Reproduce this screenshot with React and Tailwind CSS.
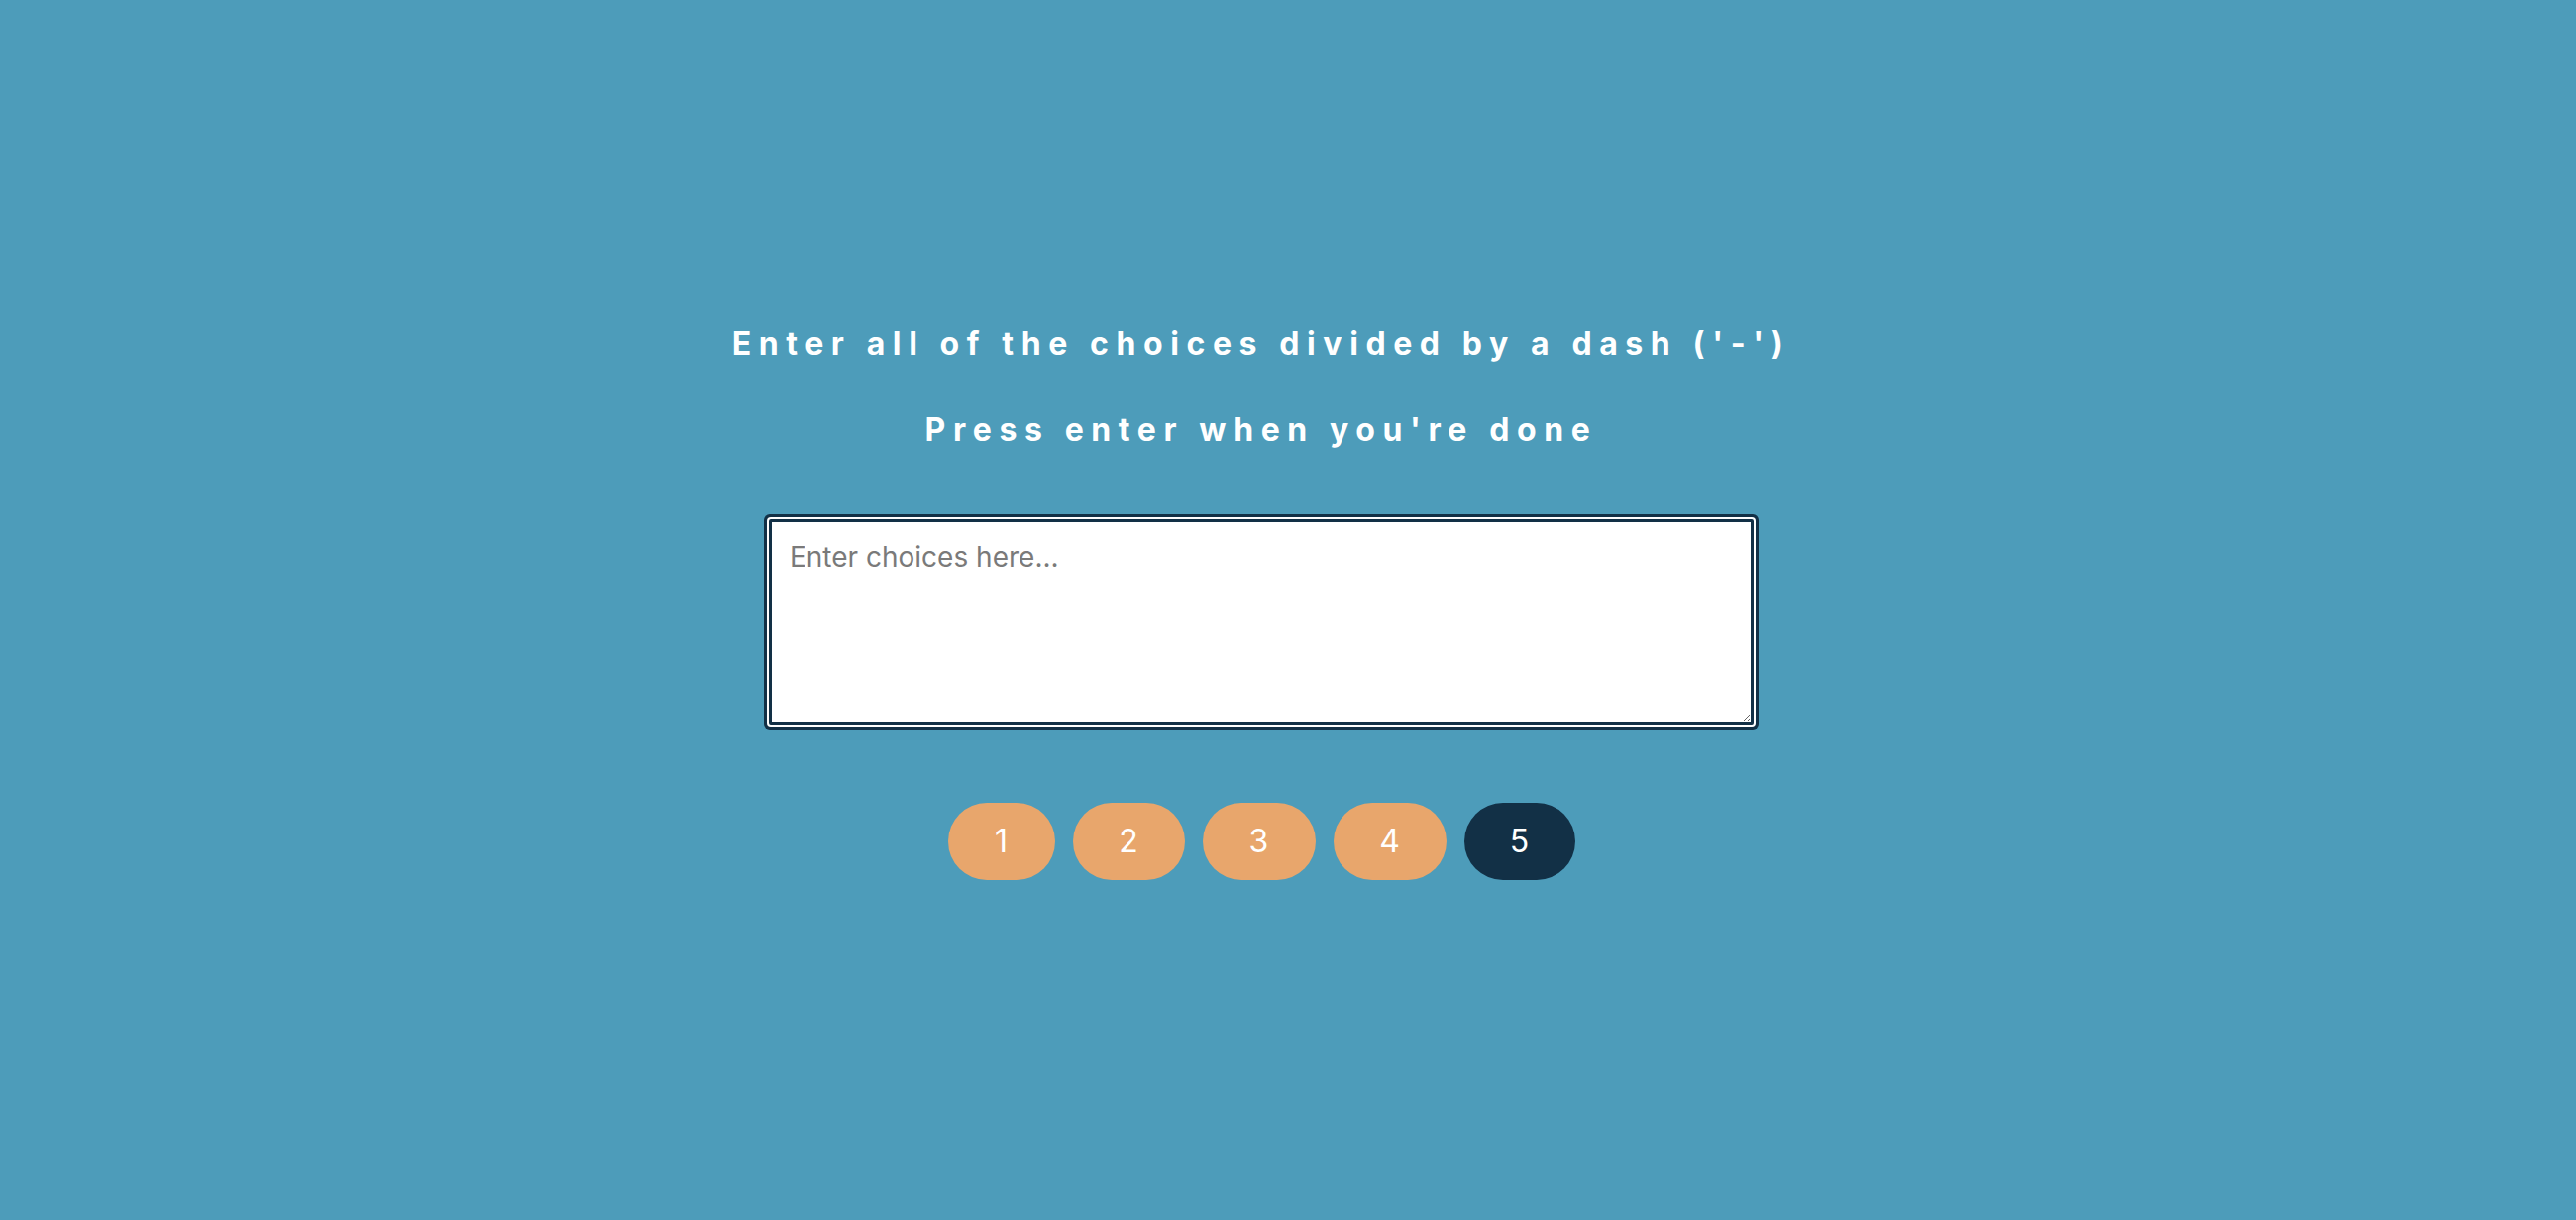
import React from "react";

const buttons = [
  { label: "1", cls: "w-[108px] bg-[#e8a66c]" },
  { label: "2", cls: "w-[113px] bg-[#e8a66c]" },
  { label: "3", cls: "w-[114px] bg-[#e8a66c]" },
  { label: "4", cls: "w-[114px] bg-[#e8a66c]" },
  { label: "5", cls: "w-[112px] bg-[#123046]" },
];

export default function App() {
  return (
    <div className="min-h-screen w-full bg-[#4d9cba] overflow-hidden">
      <div className="flex flex-col items-center pt-[328px] pr-[54px]">
        <h1 className="font-['Inter',sans-serif] font-bold text-[32px] leading-[37px] tracking-[7.6px] text-white">
          Enter all of the choices divided by a dash ('-')
        </h1>
        <h2 className="mt-[50px] font-['Inter',sans-serif] font-bold text-[32px] leading-[37px] tracking-[7.6px] text-white">
          Press enter when you're done
        </h2>
        <textarea
          placeholder="Enter choices here..."
          className="mt-[72px] w-[994px] h-[208px] bg-white border-[3px] border-[#123046] rounded-[2px] shadow-[0_0_0_2px_#ffffff,0_0_0_5px_#123046] px-[18px] py-[18px] font-['Inter',sans-serif] text-[28px] leading-[34px] text-[#333] placeholder:text-[#7a7a7a] outline-none"
        />
        <div className="mt-[78px] flex gap-[18px]">
          {buttons.map((b) => (
            <button
              key={b.label}
              className={`${b.cls} h-[78px] rounded-full flex items-center justify-center font-['Inter',sans-serif] text-[32px] leading-none text-white`}
            >
              {b.label}
            </button>
          ))}
        </div>
      </div>
    </div>
  );
}
